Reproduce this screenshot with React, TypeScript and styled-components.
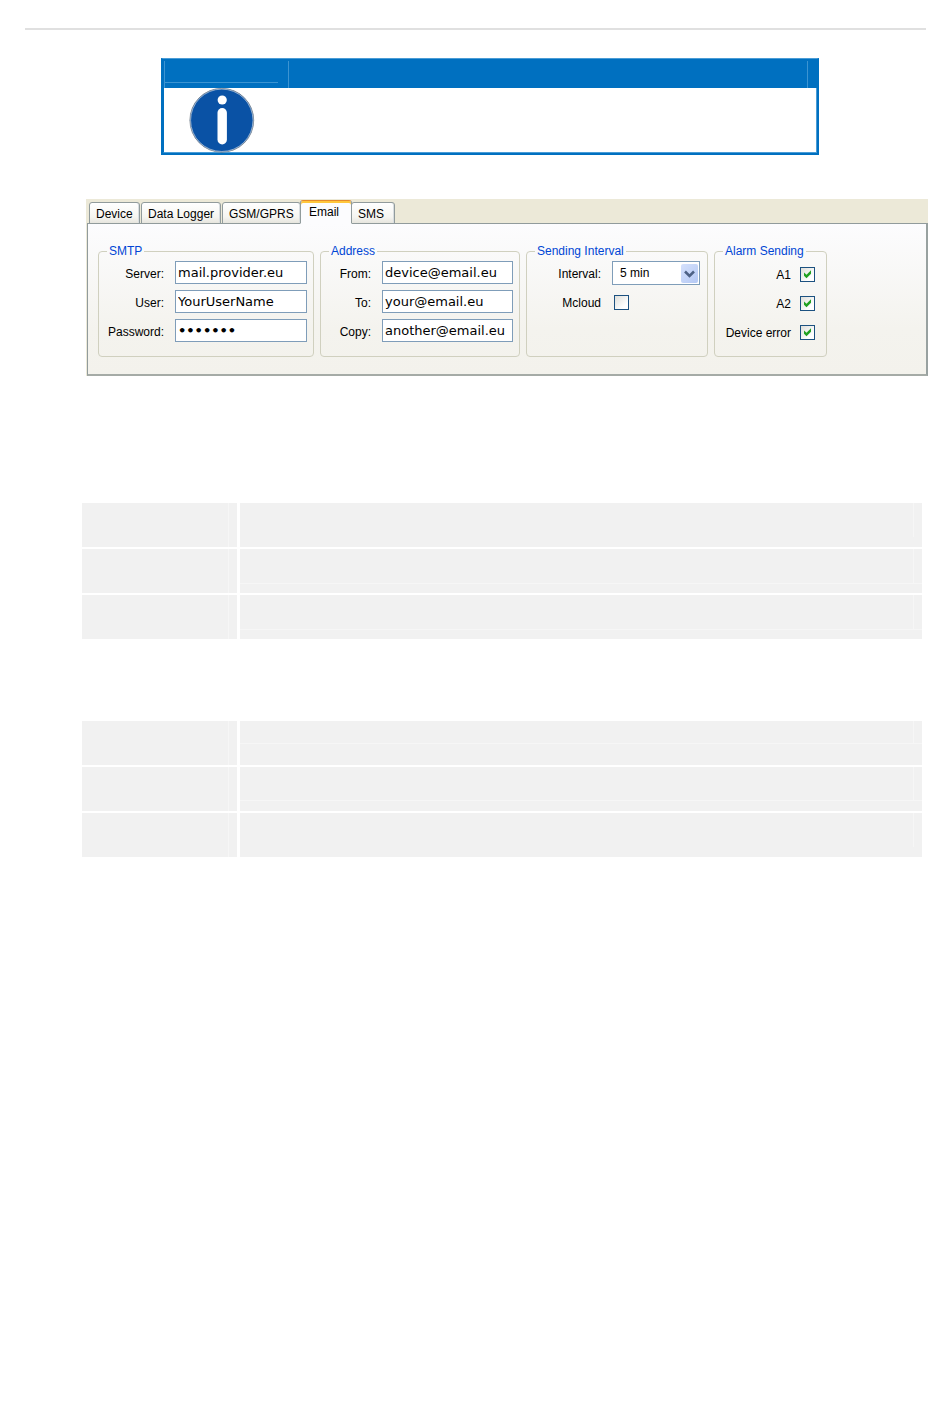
import React from "react";
import styled, { createGlobalStyle } from "styled-components";

const GlobalStyle = createGlobalStyle`
  *, *::before, *::after { box-sizing: border-box; }
  body {
    margin: 0;
    background: #fff;
    color: #000;
    font-family: "Liberation Sans", Arial, sans-serif;
    font-size: 12px;
    line-height: 16px;
  }
`;

const Page = styled.main`
  padding: 28px 22px 40px 25px;
`;

const TopRule = styled.hr`
  height: 2px;
  margin: 0 2px 28px 0;
  border: 0;
  background: #e0e0e0;
`;

const Note = styled.section`
  margin: 0 109px 44px 136px;
  border: 2px solid #0070c0;
  border-top: 1px solid #4a9cd6;
`;

const NoteHeader = styled.div`
  display: grid;
  grid-template-columns: 124px 1fr 10px;
  height: 29px;
  padding: 2px 0 0 1px;
  background: #0070c0;
`;

const NoteHeaderCell = styled.div`
  border-left: 1px solid #3c94d2;
`;

const NoteHeaderRule = styled.div`
  width: 113px;
  height: 22px;
  border-bottom: 1px solid #3c94d2;
`;

const NoteBody = styled.div`
  height: 65px;
  padding-left: 25px;
  border: solid #4a9cd6;
  border-width: 0 1px 1px;
  border-left-color: #0070c0;
`;

const InfoIcon = styled.svg`
  display: block;
  width: 66px;
  height: 66px;
  overflow: visible;
`;

const Settings = styled.section`
  margin: 0 0 127px 61px;
  background: #ece9d8;
`;

const TabList = styled.div`
  display: flex;
  align-items: flex-end;
  height: 25px;
  padding-left: 3px;
`;

const Tab = styled.button<{ $width: number; $active?: boolean }>`
  position: relative;
  z-index: ${(p) => (p.$active ? 1 : 0)};
  width: ${(p) => p.$width}px;
  height: ${(p) => (p.$active ? 24 : 22)}px;
  margin: ${(p) => (p.$active ? "0 -1px 0 -2px" : "0 1px 0 0")};
  padding: ${(p) => (p.$active ? "0 0 1px 8px" : "2px 0 0 6px")};
  border: 1px solid #919b9c;
  border-top-color: ${(p) => (p.$active ? "#e68b2c" : "#919b9c")};
  border-bottom-color: ${(p) => (p.$active ? "#fcfcfe" : "#919b9c")};
  border-radius: 3px 3px 0 0;
  background: ${(p) => (p.$active ? "#fcfcfe" : "linear-gradient(#fff 0%, #f5f5f1 70%, #e6e5de 100%)")};
  box-shadow: ${(p) => (p.$active ? "inset 0 2px 0 #ffc73c" : "inset -1px 0 0 #d8dde0")};
  color: #000;
  font: inherit;
  text-align: left;
  white-space: nowrap;
`;

const Panel = styled.div`
  display: flex;
  flex-wrap: wrap;
  gap: 6px;
  margin: -1px 0 0 1px;
  padding: 19px 10px 17px;
  border: 1px solid #919b9c;
  border-right-width: 2px;
  border-bottom-width: 2px;
  border-right-color: #98a1a0;
  border-bottom-color: #a5aba6;
  background: linear-gradient(#fcfcfe 0%, #f4f3ee 70%, #f3f2ec 100%);
`;

const Group = styled.fieldset<{ $width: number }>`
  width: ${(p) => p.$width}px;
  height: 114px;
  min-width: 0;
  margin: 0;
  padding: 0 6px 0 8px;
  border: 1px solid #d0d0bf;
  border-radius: 4px;
`;

const Legend = styled.legend`
  padding: 0 2px;
  color: #0046d5;
`;

const Rows = styled.div<{ $top: number }>`
  display: flex;
  flex-direction: column;
  gap: 6px;
  padding-top: ${(p) => p.$top}px;
`;

const Row = styled.div`
  display: flex;
  align-items: center;
  gap: 11px;
  height: 23px;
`;

const Label = styled.label<{ $width: number }>`
  flex: none;
  width: ${(p) => p.$width}px;
  padding-top: 2px;
  text-align: right;
  white-space: nowrap;
`;

const TextBox = styled.input`
  flex: 1;
  min-width: 0;
  height: 23px;
  padding: 0 2px;
  border: 1px solid #7f9db9;
  border-radius: 0;
  background: #fff;
  color: #000;
  font-family: "DejaVu Sans", Verdana, sans-serif;
  font-size: 13px;
  font-weight: ${(p) => (p.type === "password" ? 700 : 400)};
  outline: none;
`;

const SelectFrame = styled.div`
  position: relative;
  width: 88px;
  height: 24px;
`;

const Select = styled.select`
  appearance: none;
  width: 100%;
  height: 100%;
  padding: 0 20px 0 7px;
  border: 1px solid #7f9db9;
  border-radius: 0;
  background: #fff;
  color: #000;
  font: inherit;
`;

const SelectArrow = styled.svg`
  position: absolute;
  top: 3px;
  right: 2px;
  width: 17px;
  height: 19px;
  border-radius: 2px;
  background: linear-gradient(135deg, #d5e1fc, #b4c8f4);
  pointer-events: none;
`;

const CheckFrame = styled.span`
  display: grid;
  flex: none;
  width: 15px;
  height: 15px;
  > * { grid-area: 1 / 1; }
`;

const CheckBox = styled.input`
  appearance: none;
  width: 15px;
  height: 15px;
  margin: 0;
  border: 1px solid #1c5180;
  background: linear-gradient(135deg, #dfdfda, #fff 75%);
`;

const CheckMark = styled.svg`
  width: 15px;
  height: 15px;
  pointer-events: none;
`;

const CheckRow = styled(Row)`
  justify-content: flex-end;
  gap: 9px;
  padding-right: 5px;
`;

const CheckLabel = styled.label`
  white-space: nowrap;
`;

const IndentedCheck = styled.div`
  padding: 2px 0 0 2px;
`;

const DataTable = styled.table`
  width: calc(100% - 63px);
  margin: 0 0 82px 57px;
  border-collapse: collapse;
  table-layout: fixed;
`;

const NameColumn = styled.col`
  width: 156px;
`;

const DataRow = styled.tr`
  height: 44px;
  border-bottom: 2px solid #fff;
  &:last-child { border-bottom: 0; }
`;

const Cell = styled.td`
  height: 44px;
  padding: 0;
  background: #f1f1f1;
  vertical-align: top;
  &:first-child { border-right: 3px solid #fff; }
`;

const CellBlock = styled.div<{ $height: number; $rule?: boolean }>`
  height: ${(p) => p.$height}px;
  padding-right: 8px;
  border-bottom: ${(p) => (p.$rule ? "1px solid #f6f6f6" : "0")};
`;

const CellText = styled.div`
  height: 100%;
  border-right: 1px solid #f6f6f6;
`;

type Check = { id: string; checked?: boolean };

function Checkbox({ id, checked }: Check) {
  const [on, setOn] = React.useState(!!checked);
  return (
    <CheckFrame>
      <CheckBox id={id} type="checkbox" checked={on} onChange={() => setOn(!on)} />
      {on && (
        <CheckMark viewBox="0 0 15 15" aria-hidden="true">
          <path d="M4 5.500v3.300l2.500 2.500L11 6.800V3.200L6.500 7.800z" fill="#21a121" />
        </CheckMark>
      )}
    </CheckFrame>
  );
}

type FieldData = { id: string; label: string; value: string; type?: string };

const smtp: FieldData[] = [
  { id: "server", label: "Server:", value: "mail.provider.eu" },
  { id: "user", label: "User:", value: "YourUserName" },
  { id: "password", label: "Password:", value: "1234567", type: "password" },
];

const address: FieldData[] = [
  { id: "from", label: "From:", value: "device@email.eu" },
  { id: "to", label: "To:", value: "your@email.eu" },
  { id: "copy", label: "Copy:", value: "another@email.eu" },
];

const alarms = [
  { id: "a1", label: "A1" },
  { id: "a2", label: "A2" },
  { id: "device-error", label: "Device error" },
];

function Fields({ items, labelWidth }: { items: FieldData[]; labelWidth: number }) {
  return (
    <Rows $top={2}>
      {items.map((f) => (
        <Row key={f.id}>
          <Label htmlFor={f.id} $width={labelWidth}>{f.label}</Label>
          <TextBox id={f.id} type={f.type ?? "text"} defaultValue={f.value} spellCheck={false} />
        </Row>
      ))}
    </Rows>
  );
}

type RowShape = { height: number; rule?: boolean };

const firstTable: RowShape[] = [{ height: 34 }, { height: 35, rule: true }, { height: 35, rule: true }];
const secondTable: RowShape[] = [{ height: 23, rule: true }, { height: 34, rule: true }, { height: 34 }];

function EmptyTable({ rows }: { rows: RowShape[] }) {
  return (
    <DataTable>
      <colgroup>
        <NameColumn />
        <col />
      </colgroup>
      <tbody>
        {rows.map((r, i) => (
          <DataRow key={i}>
            <Cell><CellBlock $height={44}><CellText /></CellBlock></Cell>
            <Cell><CellBlock $height={r.height} $rule={r.rule}><CellText /></CellBlock></Cell>
          </DataRow>
        ))}
      </tbody>
    </DataTable>
  );
}

export default function App() {
  return (
    <Page>
      <GlobalStyle />
      <TopRule />
      <Note>
        <NoteHeader>
          <NoteHeaderCell><NoteHeaderRule /></NoteHeaderCell>
          <NoteHeaderCell />
          <NoteHeaderCell />
        </NoteHeader>
        <NoteBody>
          <InfoIcon viewBox="0 0 66 66" aria-hidden="true">
            <circle cx="32.800" cy="32.300" r="31.900" fill="#0a52a5" stroke="#777f88" strokeWidth=".8" />
            <circle cx="32.800" cy="32.300" r="31.200" fill="none" stroke="#dde5ee" strokeWidth=".6" />
            <circle cx="33.200" cy="12" r="4.600" fill="#fff" />
            <rect x="28.500" y="20" width="9.400" height="36.500" rx="4.700" fill="#fff" />
          </InfoIcon>
        </NoteBody>
      </Note>

      <Settings>
        <TabList role="tablist">
          <Tab role="tab" $width={51}>Device</Tab>
          <Tab role="tab" $width={80}>Data Logger</Tab>
          <Tab role="tab" $width={79}>GSM/GPRS</Tab>
          <Tab role="tab" aria-selected="true" $width={52} $active>Email</Tab>
          <Tab role="tab" $width={44}>SMS</Tab>
        </TabList>
        <Panel role="tabpanel">
          <Group $width={216}>
            <Legend>SMTP</Legend>
            <Fields items={smtp} labelWidth={57} />
          </Group>
          <Group $width={200}>
            <Legend>Address</Legend>
            <Fields items={address} labelWidth={42} />
          </Group>
          <Group $width={182}>
            <Legend>Sending Interval</Legend>
            <Rows $top={2}>
              <Row>
                <Label htmlFor="interval" $width={66}>Interval:</Label>
                <SelectFrame>
                  <Select id="interval" defaultValue="5">
                    <option value="5">5 min</option>
                  </Select>
                  <SelectArrow viewBox="0 0 17 19" aria-hidden="true">
                    <path d="M4 7.500l4.500 4.500L13 7.500" fill="none" stroke="#4d6185" strokeWidth="2.500" />
                  </SelectArrow>
                </SelectFrame>
              </Row>
              <Row>
                <Label htmlFor="mcloud" $width={66}>Mcloud</Label>
                <IndentedCheck><Checkbox id="mcloud" /></IndentedCheck>
              </Row>
            </Rows>
          </Group>
          <Group $width={113}>
            <Legend>Alarm Sending</Legend>
            <Rows $top={4}>
              {alarms.map((a) => (
                <CheckRow key={a.id}>
                  <CheckLabel htmlFor={a.id}>{a.label}</CheckLabel>
                  <Checkbox id={a.id} checked />
                </CheckRow>
              ))}
            </Rows>
          </Group>
        </Panel>
      </Settings>

      <EmptyTable rows={firstTable} />
      <EmptyTable rows={secondTable} />
    </Page>
  );
}
